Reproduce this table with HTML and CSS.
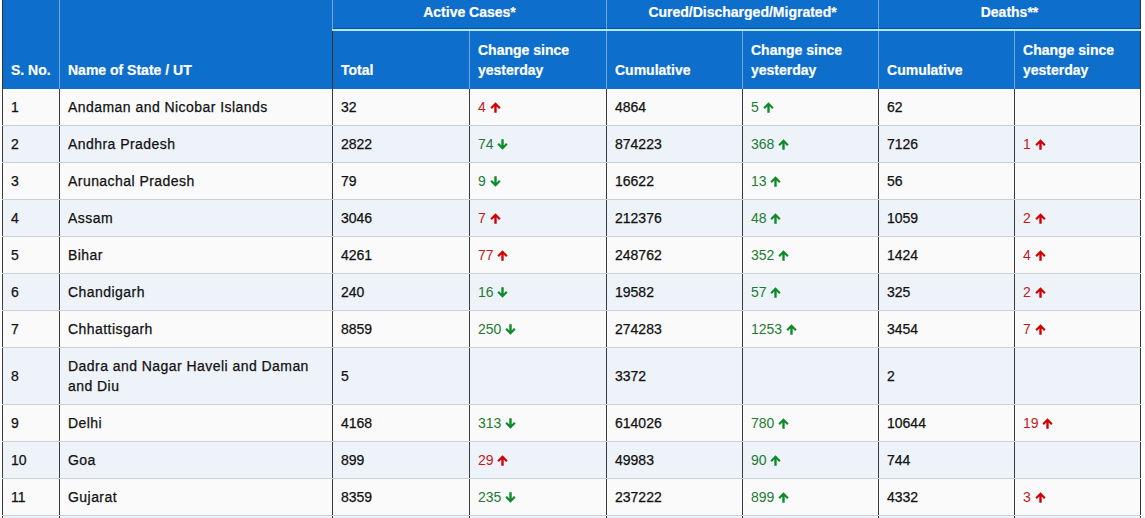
FILE: index.html
```html
<!DOCTYPE html>
<html>
<head>
<meta charset="utf-8">
<link rel="stylesheet" href="styles.css">
</head>
<body>
<table class="tbl">
  <colgroup>
    <col class="c-sno"><col class="c-name"><col class="c-a"><col class="c-a"><col class="c-b"><col class="c-b"><col class="c-b"><col class="c-last">
  </colgroup>
  <thead>
    <tr class="h1">
      <th rowspan="2" class="hb">S. No.</th>
      <th rowspan="2" class="hb">Name of State / UT</th>
      <th colspan="2" class="grp">Active Cases*</th>
      <th colspan="2" class="grp">Cured/Discharged/Migrated*</th>
      <th colspan="2" class="grp">Deaths**</th>
    </tr>
    <tr class="h2">
      <th>Total</th>
      <th>Change since<br>yesterday</th>
      <th>Cumulative</th>
      <th>Change since<br>yesterday</th>
      <th>Cumulative</th>
      <th>Change since<br>yesterday</th>
    </tr>
  </thead>
  <tbody id="rows"></tbody>
</table>
<script>
const up = '<svg class="ar" viewBox="0 0 12 12"><path d="M6 0.3 L11.6 5.9 L9.9 7.6 L7.3 5 V11.8 H4.7 V5 L2.1 7.6 L0.4 5.9 Z"/></svg>';
const down = '<svg class="ar" viewBox="0 0 12 12"><path d="M6 11.7 L11.6 6.1 L9.9 4.4 L7.3 7 V0.2 H4.7 V7 L2.1 4.4 L0.4 6.1 Z"/></svg>';
function ch(v){ if(!v) return ''; const n=v.slice(0,-1), d=v.slice(-1);
  const bad = d==='u';
  return '<span class="'+(bad?'red':'green')+'">'+n+' '+(bad?up:down)+'</span>'; }
function chg(v){ if(!v) return ''; const n=v.slice(0,-1), d=v.slice(-1);
  return '<span class="green">'+n+' '+(d==='u'?up:down)+'</span>'; }
function chd(v){ if(!v) return ''; const n=v.slice(0,-1);
  return '<span class="red">'+n+' '+up+'</span>'; }
const data = [
 [1,'Andaman and Nicobar Islands','32','4u','4864','5u','62',''],
 [2,'Andhra Pradesh','2822','74d','874223','368u','7126','1u'],
 [3,'Arunachal Pradesh','79','9d','16622','13u','56',''],
 [4,'Assam','3046','7u','212376','48u','1059','2u'],
 [5,'Bihar','4261','77u','248762','352u','1424','4u'],
 [6,'Chandigarh','240','16d','19582','57u','325','2u'],
 [7,'Chhattisgarh','8859','250d','274283','1253u','3454','7u'],
 [8,'Dadra and Nagar Haveli and Daman and Diu','5','','3372','','2',''],
 [9,'Delhi','4168','313d','614026','780u','10644','19u'],
 [10,'Goa','899','29u','49983','90u','744',''],
 [11,'Gujarat','8359','235d','237222','899u','4332','3u']
];
document.getElementById('rows').innerHTML = data.map(r =>
 '<tr><td>'+r[0]+'</td><td class="name">'+r[1]+'</td><td>'+r[2]+'</td><td>'+ch(r[3])+'</td><td>'+r[4]+'</td><td>'+chg(r[5])+'</td><td>'+r[6]+'</td><td>'+chd(r[7])+'</td></tr>'
).join('') + '<tr class="next"><td></td><td></td><td></td><td></td><td></td><td></td><td></td><td></td></tr>';
</script>
</body>
</html>
```
FILE: styles.css
```css
html, body { margin: 0; padding: 0; background: #ffffff; }
body { padding-left: 2px; overflow: hidden; }
.tbl {
  border-collapse: collapse;
  table-layout: fixed;
  width: 1138px;
  font-family: "Liberation Sans", Arial, sans-serif;
  border-left: 1px solid #333;
  border-right: 1px solid #333;
}
.c-sno { width: 57px; }
.c-name { width: 273px; }
.c-a { width: 137px; }
.c-b { width: 136px; }
.c-last { width: 126px; }
thead th {
  background: #0e6ecb;
  color: #fff;
  font-size: 14px;
  font-weight: bold;
  text-align: left;
  border-left: 1px solid #6ea6dd;
  padding: 0 8px;
  line-height: 20px;
  -webkit-text-stroke: 0.2px #fff;
}
thead th:first-child { border-left: 1px solid #333; }
.h1 th.grp {
  height: 24px;
  padding: 0 8px 5px;
  text-align: center;
  vertical-align: middle;
  border-bottom: 2px solid #aee9f8;
  box-shadow: inset 0 -1px 0 #0a4f93;
}
.h1 th.hb { vertical-align: bottom; padding-bottom: 9px; }
.h2 th { height: 40px; vertical-align: bottom; padding-top: 9px; padding-bottom: 9px; }
tbody td {
  height: 36px;
  padding: 0 8px;
  font-size: 14px;
  color: #111;
  border-left: 1px solid #3a3a3a;
  border-bottom: 1px solid #c9d1d9;
  line-height: 20px;
  vertical-align: middle;
  -webkit-text-stroke: 0.25px #111;
}
tbody td.name { letter-spacing: 0.45px; }
tbody tr:nth-child(odd) td { background: #fafafa; }
tbody tr:nth-child(even) td { background: #edf3f9; }
tbody tr:nth-child(8) td { height: 56px; }
.red { color: #c21a1a; }
.green { color: #1f7b33; }
tbody td .red, tbody td .green { -webkit-text-stroke: 0; }
.ar { width: 11px; height: 11px; vertical-align: -1px; }
.red .ar { fill: #d40000; }
.green .ar { fill: #0d8a2a; }
```
